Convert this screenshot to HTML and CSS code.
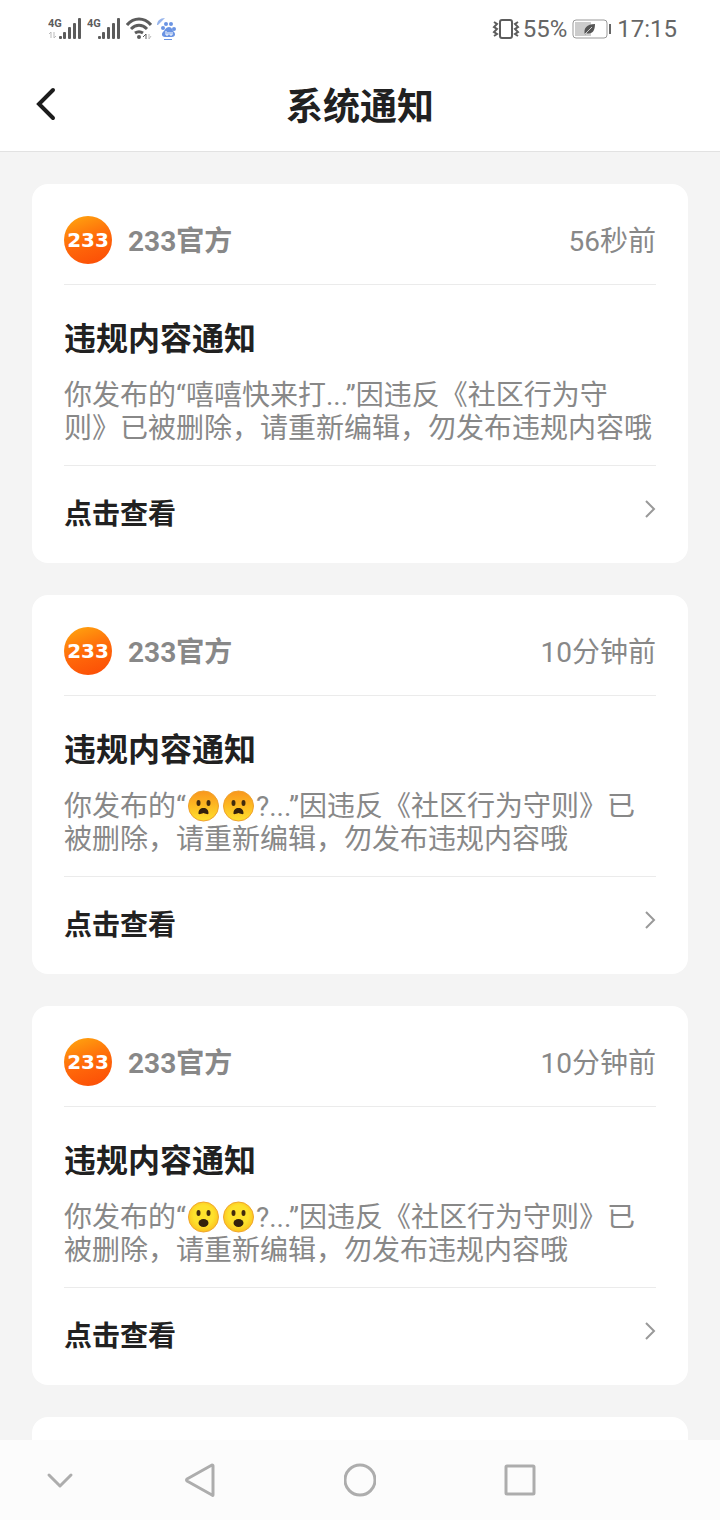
FILE: index.html
```html
<!DOCTYPE html>
<html lang="zh-CN">
<head>
    <meta charset="UTF-8">
    <meta name="viewport" content="width=device-width, initial-scale=1.0">
    <title>系统通知</title>
    <link rel="stylesheet" href="styles.css">
</head>
<body>
    <!-- 公用图标 -->
    <svg class="symbols" aria-hidden="true">
        <defs>
            <linearGradient id="frownFill" x1="0" y1="0" x2="0" y2="1">
                <stop offset="0" stop-color="#f9961d"/>
                <stop offset="0.5" stop-color="#fdba22"/>
                <stop offset="1" stop-color="#fee02e"/>
            </linearGradient>
            <radialGradient id="openFill" cx="0.5" cy="0.45" r="0.55">
                <stop offset="0.6" stop-color="#fee12d"/>
                <stop offset="1" stop-color="#fbc11f"/>
            </radialGradient>
        </defs>
        <symbol id="bars" viewBox="0 0 34 24">
            <g fill="#5c5c5c">
                <rect x="11" y="19" width="3" height="3" rx="1"/>
                <rect x="15" y="15" width="3" height="7" rx="1"/>
                <rect x="20" y="10" width="3" height="12" rx="1"/>
                <rect x="25" y="6" width="3" height="16" rx="1"/>
                <rect x="30" y="1" width="3" height="21" rx="1"/>
            </g>
        </symbol>
        <symbol id="arrow" viewBox="0 0 12 20">
            <path d="M2 2l8 8-8 8" fill="none" stroke="#999" stroke-width="2"/>
        </symbol>
        <symbol id="frown" viewBox="0 0 32 32">
            <circle cx="16" cy="16" r="15" fill="url(#frownFill)" stroke="#f0a02c"/>
            <ellipse cx="11" cy="13" rx="2" ry="3" fill="#422b0d"/>
            <ellipse cx="21" cy="13" rx="2" ry="3" fill="#422b0d"/>
            <path d="M11 23c0-3 2-5 5-5s5 2 5 5c0 2-2 1-5 0-3 1-5 2-5 0z" fill="#33200c"/>
        </symbol>
        <symbol id="open" viewBox="0 0 32 32">
            <circle cx="16" cy="16" r="15" fill="url(#openFill)" stroke="#f1a62b"/>
            <ellipse cx="11" cy="12" rx="2" ry="3" fill="#422b0d"/>
            <ellipse cx="21" cy="12" rx="2" ry="3" fill="#422b0d"/>
            <ellipse cx="16" cy="22" rx="5" ry="4" fill="#33200c"/>
        </symbol>
    </svg>

    <div class="status-bar">
        <div class="status-left">
            <svg width="34" height="24" viewBox="0 0 34 24">
                <text x="0" y="10" class="signal-label">4G</text>
                <use href="#bars"/>
                <path d="M3 21v-6l-2 2M6 15v6l2-2" fill="none" stroke="#bbb"/>
            </svg>
            <svg width="34" height="24" viewBox="0 0 34 24">
                <text x="0" y="10" class="signal-label">4G</text>
                <use href="#bars"/>
            </svg>
            <svg width="26" height="24" viewBox="0 0 26 24" fill="none" stroke="#5c5c5c" stroke-width="3">
                <path d="M1 8C8 0 18 0 25 8M5 12c5-5 11-5 16 0M9 16c3-2 5-2 8 0"/>
                <circle cx="13" cy="20" r="2" fill="#5c5c5c" stroke="none"/>
                <path d="M17 20l3-3v5" stroke-width="1"/>
                <path d="M23 17v5l2-3" stroke="#bbb" stroke-width="1"/>
            </svg>
            <svg width="20" height="24" viewBox="0 0 20 24" fill="#6b94e3">
                <path d="M0 8c0-4 3-7 8-7L1 8z" opacity="0.7"/>
                <ellipse cx="6" cy="11" rx="2" ry="2"/>
                <ellipse cx="9" cy="7" rx="2" ry="2"/>
                <ellipse cx="14" cy="7" rx="2" ry="2"/>
                <ellipse cx="17" cy="12" rx="2" ry="2"/>
                <path d="M12 10c3 0 3 3 5 5s1 5-2 5H8c-3 0-4-3-2-5s3-5 6-5z"/>
                <path d="M9 14v4h2v-3M13 15v3h2v-3" fill="none" stroke="#fff"/>
                <path d="M7 22h8v1H7z"/>
            </svg>
        </div>
        <div class="status-right">
            <svg width="28" height="24" viewBox="0 0 28 24" fill="none" stroke="#5c5c5c" stroke-width="2">
                <rect x="8" y="3" width="12" height="18" rx="2"/>
                <path d="M2 5l3 2-3 3 3 2-3 3 3 2-3 2M26 5l-3 2 3 3-3 2 3 3-3 2 3 2"/>
            </svg>
            <span>55%</span>
            <svg class="battery" width="40" height="24" viewBox="0 0 40 24">
                <rect x="1" y="3" width="34" height="18" rx="3" fill="#fff" stroke="#999" stroke-width="1"/>
                <path d="M3 5h16v14H3z" fill="#ccc"/>
                <path d="M13 18c-2-7 2-11 10-11 0 7-3 11-9 9z" fill="#555"/>
                <path d="M12 18l8-8" stroke="#ccc"/>
                <rect x="37" y="7" width="2" height="10" fill="#666"/>
            </svg>
            <span>17:15</span>
        </div>
    </div>

    <header class="header">
        <button class="back-btn" type="button" aria-label="返回">
            <svg width="20" height="34" viewBox="0 0 20 34">
                <path d="M17 3L3 17l14 14" fill="none" stroke="#1c1c1c" stroke-width="4" stroke-linecap="round"/>
            </svg>
        </button>
        <h1>系统通知</h1>
    </header>

    <main class="list">
        <article class="card">
            <div class="card-header">
                <span class="avatar">233</span>
                <span class="name">233官方</span>
                <span class="time">56秒前</span>
            </div>
            <div class="card-body">
                <h2>违规内容通知</h2>
                <p>你发布的“嘻嘻快来打...”因违反《社区行为守则》已被删除，请重新编辑，勿发布违规内容哦</p>
            </div>
            <a class="card-link" href="#">
                点击查看
                <svg class="arrow"><use href="#arrow"/></svg>
            </a>
        </article>

        <article class="card">
            <div class="card-header">
                <span class="avatar">233</span>
                <span class="name">233官方</span>
                <span class="time">10分钟前</span>
            </div>
            <div class="card-body">
                <h2>违规内容通知</h2>
                <p>你发布的“<svg class="emoji"><use href="#frown"/></svg><svg class="emoji"><use href="#frown"/></svg>?...”因违反《社区行为守则》已被删除，请重新编辑，勿发布违规内容哦</p>
            </div>
            <a class="card-link" href="#">
                点击查看
                <svg class="arrow"><use href="#arrow"/></svg>
            </a>
        </article>

        <article class="card">
            <div class="card-header">
                <span class="avatar">233</span>
                <span class="name">233官方</span>
                <span class="time">10分钟前</span>
            </div>
            <div class="card-body">
                <h2>违规内容通知</h2>
                <p>你发布的“<svg class="emoji"><use href="#open"/></svg><svg class="emoji"><use href="#open"/></svg>?...”因违反《社区行为守则》已被删除，请重新编辑，勿发布违规内容哦</p>
            </div>
            <a class="card-link" href="#">
                点击查看
                <svg class="arrow"><use href="#arrow"/></svg>
            </a>
        </article>

        <article class="card"></article>
    </main>

    <nav class="nav-bar">
        <button type="button" aria-label="收起">
            <svg width="32" height="36" viewBox="0 0 32 36"><path d="M5 13l11 11 11-11"/></svg>
        </button>
        <button type="button" aria-label="后退">
            <svg width="32" height="36" viewBox="0 0 32 36"><path d="M29 4v29q0 1-1 0L3 19q-1-1 0-2L28 3q1 0 1 1z"/></svg>
        </button>
        <button type="button" aria-label="主页">
            <svg width="32" height="36" viewBox="0 0 32 36"><circle cx="16" cy="18" r="15"/></svg>
        </button>
        <button type="button" aria-label="最近任务">
            <svg width="32" height="36" viewBox="0 0 32 36"><rect x="2" y="4" width="28" height="28" rx="1"/></svg>
        </button>
    </nav>
</body>
</html>
```
FILE: styles.css
```css
* {
    margin: 0;
    padding: 0;
    box-sizing: border-box;
}

body {
    font-family: Roboto, 'Noto Sans CJK SC', sans-serif;
    text-spacing-trim: space-all;
    background: #f4f4f4;
    color: #212121;
    height: 100vh;
    display: flex;
    flex-direction: column;
    overflow: hidden;
}

svg {
    display: block;
    flex-shrink: 0;
}

button {
    border: none;
    background: none;
    cursor: pointer;
}

.symbols {
    position: absolute;
    width: 0;
    height: 0;
}

/* 状态栏 */
.status-bar {
    height: 60px;
    padding: 0 43px 2px 48px;
    background: #fff;
    color: #666;
    font-size: 24px;
    display: flex;
    align-items: center;
    justify-content: space-between;
}

.status-left,
.status-right {
    display: flex;
    align-items: center;
    gap: 5px;
}

.status-right {
    gap: 3px;
}

.battery {
    margin: 0 2px;
}

.signal-label {
    font-family: Roboto, sans-serif;
    font-size: 11px;
    font-weight: bold;
    fill: #5c5c5c;
}

/* 标题栏 */
.header {
    height: 92px;
    padding: 0 36px;
    background: #fff;
    border-bottom: 1px solid #e2e2e2;
    display: grid;
    grid-template-columns: 1fr auto 1fr;
    align-items: center;
}

.header h1 {
    padding-top: 4px;
    font-size: 37px;
    line-height: 48px;
}

.back-btn {
    justify-self: start;
    padding-bottom: 4px;
}

/* 通知列表 */
.list {
    flex: 1;
    min-height: 0;
    padding: 32px;
    overflow: hidden;
}

.card {
    min-height: 120px;
    margin-bottom: 32px;
    padding: 0 32px;
    background: #fff;
    border-radius: 16px;
}

.card-header {
    padding: 32px 0 20px;
    border-bottom: 1px solid #ebebeb;
    display: flex;
    align-items: center;
    gap: 16px;
    font-size: 28px;
    color: #888;
}

.avatar {
    width: 48px;
    height: 48px;
    border-radius: 50%;
    background: linear-gradient(160deg, #ffa30f 5%, #ff6a0a 50%, #fb4a06);
    color: #fff;
    font-family: 'DejaVu Sans', sans-serif;
    font-size: 20px;
    font-weight: bold;
    line-height: 48px;
    display: flex;
    justify-content: center;
}

.name,
.time {
    padding-top: 4px;
    line-height: 32px;
}

.name {
    font-weight: bold;
}

.time {
    margin-left: auto;
}

.card-body {
    padding: 34px 0 20px;
    border-bottom: 1px solid #ebebeb;
}

.card-body h2 {
    margin-bottom: 20px;
    font-size: 32px;
    line-height: 40px;
}

.card-body p {
    font-size: 28px;
    line-height: 33px;
    color: #888;
}

.emoji {
    display: inline-block;
    width: 33px;
    height: 32px;
    margin: -7px 1px -1px;
    vertical-align: middle;
}

.card-link {
    padding: 29px 0 28px;
    display: flex;
    justify-content: space-between;
    font-size: 28px;
    font-weight: bold;
    line-height: 40px;
    color: #212121;
    text-decoration: none;
}

.arrow {
    width: 12px;
    height: 20px;
    margin-top: 4px;
}

/* 底部导航 */
.nav-bar {
    height: 80px;
    background: #fcfcfc;
    display: grid;
    grid-template-columns: 3fr 4fr 4fr 4fr 3fr;
    align-items: center;
}

.nav-bar button {
    display: flex;
    justify-content: center;
}

.nav-bar svg {
    fill: none;
    stroke: #adadad;
    stroke-width: 3;
    stroke-linecap: round;
    stroke-linejoin: round;
}
```
